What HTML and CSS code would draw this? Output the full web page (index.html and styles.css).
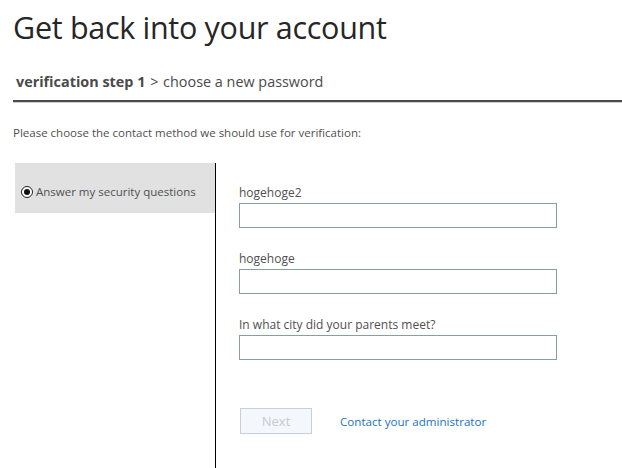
FILE: index.html
```html
<!DOCTYPE html>
<html>
<head>
<meta charset="utf-8">
<link rel="stylesheet" href="styles.css">
</head>
<body>
<div class="page">
  <h1 class="title">Get back into your account</h1>
  <div class="steps"><span class="step-current">verification step 1</span> <span class="sep">&gt;</span> choose a new password</div>
  <p class="intro">Please choose the contact method we should use for verification:</p>
  <div class="content">
    <div class="methods">
      <div class="method selected">
        <span class="radio"><span class="dot"></span></span>
        <span class="method-label">Answer my security questions</span>
      </div>
    </div>
    <div class="form">
      <div class="field">
        <label class="label">hogehoge2</label>
        <input class="input" type="text">
      </div>
      <div class="field">
        <label class="label">hogehoge</label>
        <input class="input" type="text">
      </div>
      <div class="field">
        <label class="label">In what city did your parents meet?</label>
        <input class="input" type="text">
      </div>
      <div class="actions">
        <button class="btn" disabled>Next</button>
        <a class="link" href="#">Contact your administrator</a>
      </div>
    </div>
  </div>
</div>
</body>
</html>
```

FILE: styles.css
```css
html, body {
  margin: 0;
  padding: 0;
  background: #fff;
}
body {
  font-family: "Open Sans", "Noto Sans", sans-serif;
  color: #505050;
  overflow: hidden;
}
.page {
  padding-left: 13px;
}
.title {
  margin: 0;
  padding-top: 5px;
  font-size: 30.5px;
  font-weight: 400;
  line-height: 44px;
  color: #262626;
  letter-spacing: -0.3px;
}
.steps {
  margin-top: 23px;
  padding-left: 3px;
  font-size: 14.4px;
  line-height: 20px;
  color: #4a4a4a;
  padding-bottom: 8px;
  border-bottom: 2px solid #4a4a4a;
  box-shadow: 0 1px 0 #cfcfcf;
}
.step-current {
  font-weight: 700;
}
.sep {
  margin: 0 1px;
}
.intro {
  margin: 23px 0 0;
  font-size: 11.5px;
  line-height: 16px;
  color: #505050;
}
.content {
  display: flex;
  margin-top: 22px;
  margin-left: 2px;
  min-height: 320px;
}
.methods {
  width: 200px;
  border-right: 1px solid #000;
}
.method {
  display: flex;
  align-items: flex-start;
  box-sizing: border-box;
  height: 50px;
  padding-left: 6px;
  padding-top: 22px;
  background: #e1e1e1;
  font-size: 11.5px;
  line-height: 14px;
  color: #505050;
}
.radio {
  width: 10px;
  height: 10px;
  border: 1px solid #222;
  border-radius: 50%;
  display: flex;
  align-items: center;
  justify-content: center;
  margin-right: 3px;
  margin-top: 1px;
  background: #fff;
  flex-shrink: 0;
}
.dot {
  width: 6px;
  height: 6px;
  border-radius: 50%;
  background: #111;
}
.form {
  padding-left: 23px;
  padding-top: 22px;
}
.field {
  margin-bottom: 23px;
}
.label {
  display: block;
  font-size: 12px;
  line-height: 16px;
  margin-bottom: 2px;
  color: #505050;
}
.input {
  display: block;
  box-sizing: border-box;
  width: 318px;
  height: 25px;
  margin: 0;
  border: 1px solid #8a9e9e;
  background: #fff;
  padding: 0 4px;
}
.actions {
  display: flex;
  align-items: center;
  margin-top: 48px;
  padding-left: 1px;
}
.btn {
  box-sizing: border-box;
  width: 72px;
  height: 26px;
  border: 1px solid #c6d0d8;
  background: #f4f8fc;
  color: #c2cad2;
  font-family: inherit;
  font-size: 13px;
  padding: 0;
}
.link {
  margin-left: 28px;
  font-size: 11.6px;
  color: #1a72c6;
  text-decoration: none;
}
```
